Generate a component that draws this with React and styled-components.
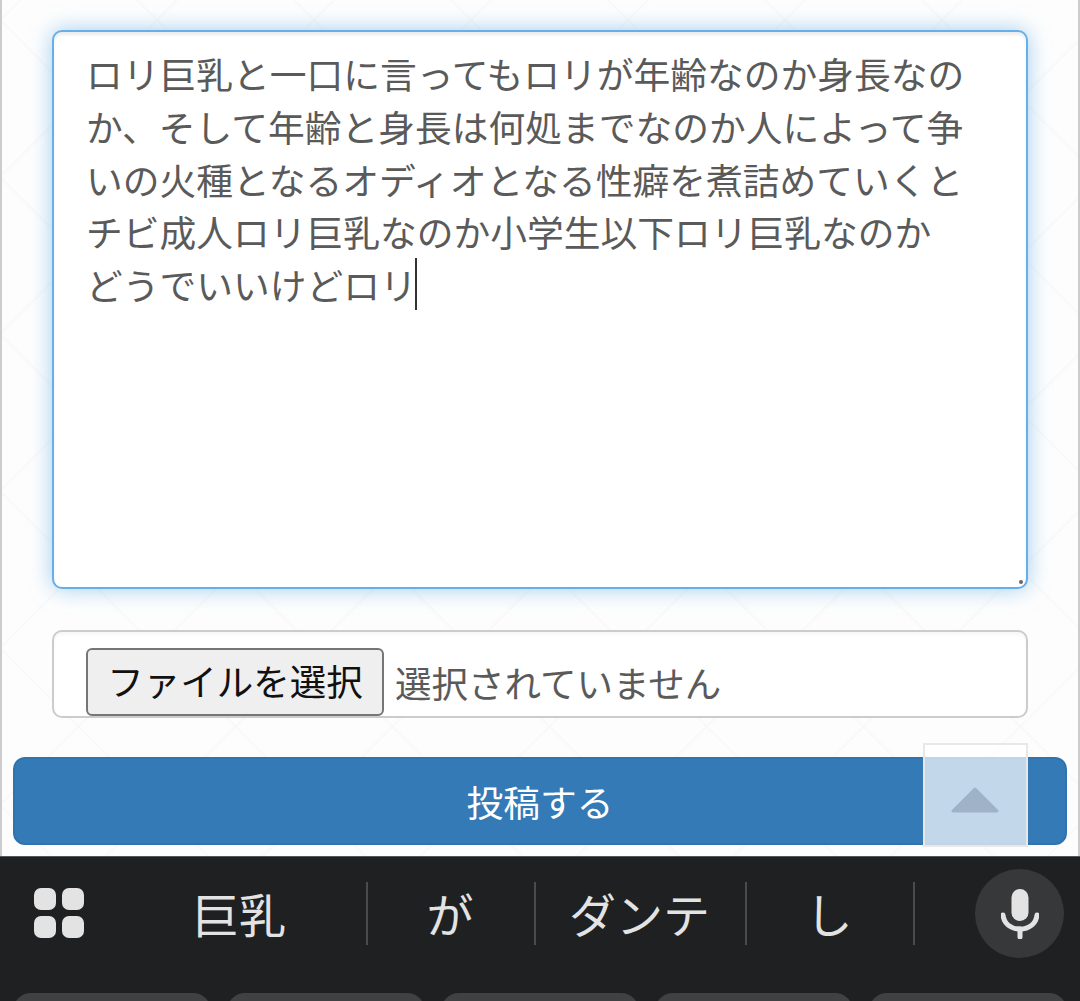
import React from 'react'
import styled, { createGlobalStyle } from 'styled-components'

const lines = [
    'ロリ巨乳と一口に言ってもロリが年齢なのか身長なの',
    'か、そして年齢と身長は何処までなのか人によって争',
    'いの火種となるオディオとなる性癖を煮詰めていくと',
    'チビ成人ロリ巨乳なのか小学生以下ロリ巨乳なのか',
    'どうでいいけどロリ',
]

const candidates = [
    { text: '巨乳', width: 254 },
    { text: 'が', width: 168 },
    { text: 'ダンテ', width: 211 },
    { text: 'し', width: 168 },
]

const App = () => {
    return (
        <Screen>
            <GlobalStyle />
            <Page>
                <FormGroup>
                    <TextArea>
                        {lines.map((line, i) => (
                            <Line key={i}>
                                {line}
                                {i === lines.length - 1 && <Caret />}
                            </Line>
                        ))}
                        <ResizeGrip />
                    </TextArea>
                    <FileBox>
                        <FileButton>ファイルを選択</FileButton>
                        <FileName>選択されていません</FileName>
                    </FileBox>
                </FormGroup>
                <SubmitButton>投稿する</SubmitButton>
                <ScrollTop>
                    <svg width="50" height="27" viewBox="0 0 50 27">
                        <polygon
                            points="24,3 46,25 2,25"
                            fill="#9fb2c7"
                            stroke="#9fb2c7"
                            strokeWidth="3"
                            strokeLinejoin="round"
                        />
                    </svg>
                </ScrollTop>
            </Page>
            <Keyboard>
                <SuggestBar>
                    <GridIcon>
                        <GridDot />
                        <GridDot />
                        <GridDot />
                        <GridDot />
                    </GridIcon>
                    {candidates.map((c) => (
                        <Candidate key={c.text} $width={c.width}>{c.text}</Candidate>
                    ))}
                    <MicButton>
                        <svg width="38" height="50" viewBox="0 0 38 50">
                            <rect x="10.5" y="0" width="17" height="32" rx="8.5" fill="#e3e3e3" />
                            <path d="M2 26c1 9 8 14 17 14s16-5 17-14" fill="none" stroke="#e3e3e3" strokeWidth="5" strokeLinecap="round" />
                            <path d="M19 40v8" fill="none" stroke="#e3e3e3" strokeWidth="5" strokeLinecap="round" />
                        </svg>
                    </MicButton>
                </SuggestBar>
                <KeyRow>
                    <Key />
                    <Key />
                    <Key />
                    <Key />
                    <Key />
                </KeyRow>
            </Keyboard>
        </Screen>
    )
}

export default App


const GlobalStyle = createGlobalStyle`
    html, body {
        margin: 0;
        padding: 0;
        background: #fff;
    }
    * {
        box-sizing: border-box;
    }
`
const Screen = styled.div`
    width: 1080px;
    height: 1001px;
    display: flex;
    flex-direction: column;
    overflow: hidden;
    font-family: "Noto Sans CJK JP", "Noto Sans", sans-serif;
`
const Page = styled.div`
    position: relative;
    height: 856px;
    padding: 0 11px;
    border-left: 2px solid #cccccc;
    border-right: 2px solid #cccccc;
    background-color: #fdfdfd;
    background-image:
        linear-gradient(45deg, transparent calc(50% - 1.5px), #f8f8f7 50%, transparent calc(50% + 1.5px)),
        linear-gradient(-45deg, transparent calc(50% - 1.5px), #f8f8f7 50%, transparent calc(50% + 1.5px));
    background-size: 157px 157px;
    background-position: -2px 20px;
`
const FormGroup = styled.div`
    padding: 30px 39px 0;
`
const TextArea = styled.div`
    position: relative;
    height: 559px;
    padding: 15px 32px;
    background: #fff;
    border: 2px solid #66afe9;
    border-radius: 10px;
    box-shadow: 0 0 21px rgba(102, 175, 233, 0.6), inset 0 3px 3px rgba(0, 0, 0, 0.075);
    color: #5a5a5a;
    font-size: 36.75px;
    line-height: 52.75px;
`
const Line = styled.div`
    white-space: nowrap;
`
const Caret = styled.span`
    display: inline-block;
    width: 2px;
    height: 52px;
    margin-left: -2px;
    vertical-align: top;
    background: #333333;
`
const ResizeGrip = styled.span`
    position: absolute;
    right: 3px;
    bottom: 3px;
    width: 4px;
    height: 4px;
    border-radius: 50%;
    background: #666666;
`
const FileBox = styled.div`
    display: flex;
    align-items: flex-start;
    gap: 11px;
    height: 88px;
    margin-top: 41px;
    padding: 16px 32px 0;
    background: #fff;
    border: 2px solid #cccccc;
    border-radius: 10px;
    box-shadow: inset 0 3px 3px rgba(0, 0, 0, 0.03);
`
const FileButton = styled.div`
    width: 298px;
    height: 68px;
    flex-shrink: 0;
    text-align: center;
    background: #efefef;
    border: 2px solid #767676;
    border-radius: 6px;
    color: #111111;
    font-size: 36.5px;
    line-height: 61px;
`
const FileName = styled.span`
    color: #5a5a5a;
    font-size: 36.5px;
    line-height: 70px;
`
const SubmitButton = styled.div`
    height: 88px;
    margin-top: 39px;
    text-align: center;
    background: #337ab7;
    border: 2px solid #3073ad;
    border-radius: 12px;
    color: #ffffff;
    font-size: 36.75px;
    line-height: 84px;
`
const ScrollTop = styled.div`
    position: absolute;
    right: 50px;
    top: 743px;
    width: 105px;
    height: 104px;
    display: flex;
    align-items: flex-start;
    justify-content: center;
    padding-top: 41px;
    background: rgba(255, 255, 255, 0.7);
    border: 2px solid #e8e8e8;
`
const Keyboard = styled.div`
    flex: 1;
    background: #1e2022;
    border-top: 1px solid #55565a;
    overflow: hidden;
`
const SuggestBar = styled.div`
    display: flex;
    align-items: flex-start;
    height: 136px;
    padding: 12px 16px 0 34px;
`
const GridIcon = styled.div`
    display: grid;
    grid-template-columns: 22px 22px;
    grid-auto-rows: 22px;
    gap: 6px;
    width: 50px;
    margin-top: 19px;
    margin-right: 30px;
`
const GridDot = styled.span`
    background: #e3e3e3;
    border-radius: 7px;
`
const Candidate = styled.div`
    width: ${(p) => p.$width}px;
    height: 63px;
    margin-top: 13px;
    padding-right: 2px;
    flex-shrink: 0;
    text-align: center;
    border-right: 2px solid #4a4b4d;
    color: #e3e3e3;
    font-size: 47px;
    font-weight: 400;
    line-height: 62px;
`
const MicButton = styled.div`
    width: 89px;
    height: 89px;
    margin-left: auto;
    display: flex;
    align-items: center;
    justify-content: center;
    background: #36383a;
    border-radius: 50%;
`
const KeyRow = styled.div`
    display: flex;
    gap: 16px;
    padding: 0 13px;
`
const Key = styled.div`
    flex: 1;
    height: 60px;
    background: #3f4143;
    border-radius: 18px;
`
